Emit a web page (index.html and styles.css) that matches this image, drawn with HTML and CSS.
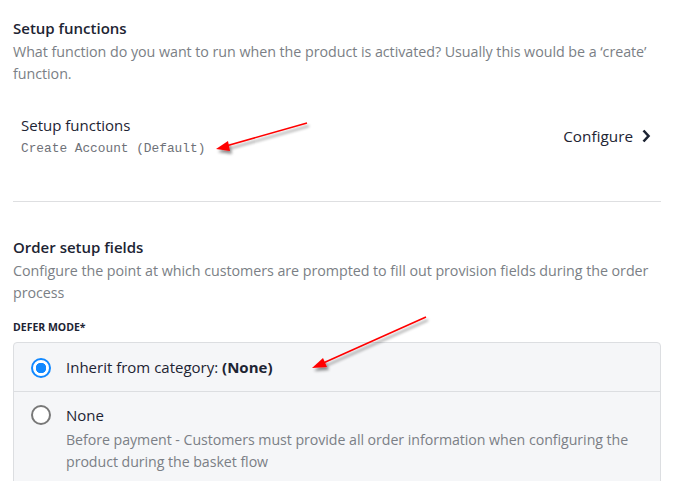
FILE: index.html
```html
<!DOCTYPE html>
<html>
<head>
<meta charset="utf-8">
<link rel="stylesheet" href="styles.css">
</head>
<body>
<div class="page">
  <section class="section first">
    <h2 class="title">Setup functions</h2>
    <p class="desc">What function do you want to run when the product is activated? Usually this would be a ‘create’ function.</p>
    <div class="func-row">
      <div class="func-info">
        <div class="func-name">Setup functions</div>
        <div class="func-code">Create Account (Default)</div>
      </div>
      <a class="configure">Configure <svg class="chev" width="10" height="14" viewBox="0 0 10 14"><path d="M2.5 1.5 L7.5 7 L2.5 12.5" fill="none" stroke="#1d2433" stroke-width="2.6"/></svg></a>
    </div>
  </section>
  <hr class="divider">
  <section class="section">
    <h2 class="title">Order setup fields</h2>
    <p class="desc">Configure the point at which customers are prompted to fill out provision fields during the order process</p>
    <div class="label">DEFER MODE*</div>
    <div class="options">
      <div class="option top">
        <span class="radio checked"></span>
        <div class="opt-text"><div class="opt-title">Inherit from category: <b>(None)</b></div></div>
      </div>
      <div class="option">
        <span class="radio"></span>
        <div class="opt-text">
          <div class="opt-title">None</div>
          <div class="opt-desc">Before payment - Customers must provide all order information when configuring the product during the basket flow</div>
        </div>
      </div>
    </div>
  </section>
</div>
<svg class="annotations" width="686" height="481" viewBox="0 0 686 481">
  <defs>
    <filter id="sh" x="-20%" y="-50%" width="140%" height="200%">
      <feGaussianBlur in="SourceAlpha" stdDeviation="1.6"/>
      <feOffset dx="2" dy="3" result="b"/>
      <feComponentTransfer><feFuncA type="linear" slope="0.45"/></feComponentTransfer>
      <feMerge><feMergeNode/><feMergeNode in="SourceGraphic"/></feMerge>
    </filter>
  </defs>
  <g filter="url(#sh)" fill="#ff0000" stroke="#ff0000">
    <line x1="307" y1="123" x2="226" y2="146" stroke-width="1.6"/>
    <polygon points="216,149 228,141 230,151" stroke="none"/>
    <line x1="426" y1="317" x2="321" y2="364" stroke-width="1.6"/>
    <polygon points="312,368 323,358 327,367" stroke="none"/>
  </g>
</svg>
</body>
</html>
```

FILE: styles.css
```css
html, body {
  margin: 0;
  padding: 0;
  background: #ffffff;
}
body {
  font-family: "Open Sans", "Noto Sans", sans-serif;
  color: #1d2433;
  position: relative;
  width: 686px;
  height: 481px;
  overflow: hidden;
}
.page {
  padding: 18px 25px 0 13px;
}
.section {
  display: flex;
  flex-direction: column;
}
.title {
  margin: 0;
  font-size: 15px;
  line-height: 20px;
  font-weight: 600;
  color: #1d2433;
}
.desc {
  margin: 3px 0 0;
  font-size: 14.3px;
  line-height: 21.5px;
  color: #7b7f86;
  letter-spacing: -0.05px;
}
.func-row {
  display: flex;
  align-items: center;
  justify-content: space-between;
  margin-top: 31px;
  padding: 0 10px 0 8px;
}
.func-info {
  display: flex;
  flex-direction: column;
}
.func-name {
  font-size: 15px;
  line-height: 20px;
  color: #1d2433;
}
.func-code {
  margin-top: 5px;
  font-family: "Liberation Mono", "DejaVu Sans Mono", monospace;
  font-size: 12.8px;
  line-height: 18px;
  color: #6e7178;
}
.configure {
  display: flex;
  align-items: center;
  gap: 8px;
  font-size: 15.3px;
  line-height: 20px;
  color: #1d2433;
  margin-top: -2px;
}
.chev {
  display: block;
}
.divider {
  border: 0;
  border-top: 1px solid #dedfe1;
  margin: 43px 0 35px;
}
.label {
  margin-top: 17px;
  font-size: 10.5px;
  line-height: 14px;
  font-weight: 700;
  color: #1d2433;
}
.options {
  margin-top: 8px;
  background: #f5f6f8;
  border: 1px solid #dcdee1;
  border-radius: 4px;
  display: flex;
  flex-direction: column;
}
.option {
  display: flex;
  align-items: flex-start;
  gap: 15px;
  padding: 13px 16px 16px 17px;
}
.option.top {
  border-bottom: 1px solid #dcdee1;
  padding: 14px 16px 13px 17px;
  align-items: center;
}
.radio {
  flex: none;
  width: 20px;
  height: 20px;
  box-sizing: border-box;
  border-radius: 50%;
  border: 2px solid #787878;
  background: #fff;
}
.radio.checked {
  border-color: #1188ff;
  background: radial-gradient(circle, #1188ff 0 5px, #fff 5.5px);
}
.opt-text {
  display: flex;
  flex-direction: column;
}
.opt-title {
  font-size: 15px;
  line-height: 21px;
  color: #1d2433;
}
.opt-title b {
  font-weight: 700;
}
.opt-desc {
  margin-top: 3px;
  font-size: 14.2px;
  line-height: 21.5px;
  color: #7b7f86;
  letter-spacing: -0.05px;
}
.annotations {
  position: absolute;
  top: 0;
  left: 0;
  pointer-events: none;
}
```
